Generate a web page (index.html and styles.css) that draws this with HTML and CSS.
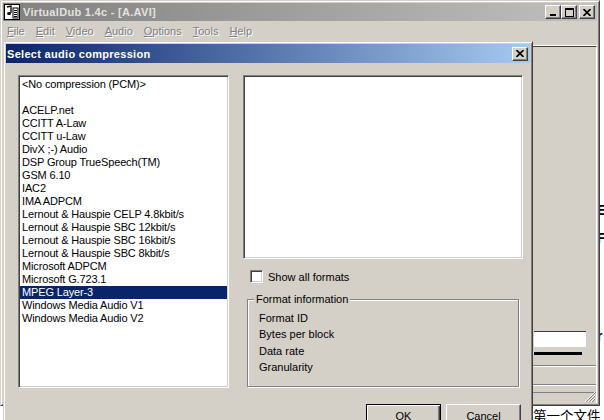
FILE: index.html
```html
<!DOCTYPE html>
<html lang="en">
<head>
  <meta charset="UTF-8" />
  <title>VirtualDub - Select audio compression</title>
  <link rel="stylesheet" href="styles.css">
</head>
<body>

  <div class="desktop">
    <!-- other windows peeking out behind -->
    <div class="behind-text">第一个文件</div>
    <div class="behind-edge">
      <span>E</span>
      <span>F</span>
      <span>r</span>
    </div>

    <!-- Main VirtualDub window (inactive) -->
    <div class="window main-window">
      <div class="titlebar inactive">
        <svg class="app-icon" width="16" height="16" viewBox="0 0 16 16">
          <rect x="0.5" y="0.5" width="15" height="15" fill="#fff" stroke="#000"/>
          <path d="M3 3 L7 2 L7 9" fill="none" stroke="#000" stroke-width="1.3"/>
          <ellipse cx="5" cy="9.5" rx="2" ry="1.6" fill="#000"/>
          <rect x="9" y="4" width="5" height="10" fill="#fff" stroke="#000"/>
          <path d="M10 6.5 H13 M10 8.5 H13 M10 10.5 H13 M10 12.5 H13" stroke="#000"/>
        </svg>
        <span class="title-text">VirtualDub 1.4c - [A.AVI]</span>
        <div class="caption-buttons">
          <span class="cap-btn">
            <svg width="8" height="8" viewBox="0 0 8 8"><rect x="1" y="6" width="6" height="2" fill="#000"/></svg>
          </span>
          <span class="cap-btn">
            <svg width="9" height="9" viewBox="0 0 9 9"><rect x="0.5" y="0.5" width="8" height="8" fill="none" stroke="#000"/><rect x="0" y="0" width="9" height="2" fill="#000"/></svg>
          </span>
          <span class="cap-btn close-gap">
            <svg width="8" height="7" viewBox="0 0 8 7"><path d="M0.5 0 L7.5 7 M7.5 0 L0.5 7" stroke="#000" stroke-width="1.6"/></svg>
          </span>
        </div>
      </div>

      <div class="menubar">
        <span><u>F</u>ile</span>
        <span><u>E</u>dit</span>
        <span><u>V</u>ideo</span>
        <span><u>A</u>udio</span>
        <span><u>O</u>ptions</span>
        <span><u>T</u>ools</span>
        <span><u>H</u>elp</span>
      </div>

      <div class="client">
        <div class="client-hidden"></div>
        <div class="side-pane">
          <div class="pane-fill"></div>
          <div class="pane-field"></div>
          <div class="pane-bar"></div>
          <div class="pane-row tall"></div>
          <div class="pane-row short"></div>
          <div class="pane-status">
            <svg class="grip" width="12" height="12" viewBox="0 0 12 12">
              <path d="M11 1 L1 11 M11 4 L4 11 M11 7 L7 11" stroke="#fff"/>
              <path d="M11 2 L2 11 M11 5 L5 11 M11 8 L8 11" stroke="#808080"/>
            </svg>
          </div>
        </div>
      </div>
    </div>

    <!-- Select audio compression dialog -->
    <div class="window dialog">
      <div class="titlebar active">
        <span class="title-text">Select audio compression</span>
        <span class="cap-btn dlg-close">
          <svg width="8" height="7" viewBox="0 0 8 7"><path d="M0.5 0 L7.5 7 M7.5 0 L0.5 7" stroke="#000" stroke-width="1.6"/></svg>
        </span>
      </div>

      <div class="dialog-body">
        <div class="dialog-main">
          <div class="sunken codec-list" id="codecList"></div>

          <div class="format-col">
            <div class="sunken format-list"></div>

            <label class="show-all">
              <span class="checkbox"></span>
              Show all formats
            </label>

            <div class="groupbox">
              <span class="group-label">Format information</span>
              <div class="info-row">Format ID</div>
              <div class="info-row">Bytes per block</div>
              <div class="info-row">Data rate</div>
              <div class="info-row">Granularity</div>
            </div>
          </div>
        </div>

        <div class="dialog-buttons">
          <button class="btn default">OK</button>
          <button class="btn">Cancel</button>
        </div>
      </div>
    </div>
  </div>

  <script>
    const codecs = [
      "<No compression (PCM)>",
      "",
      "ACELP.net",
      "CCITT A-Law",
      "CCITT u-Law",
      "DivX ;-) Audio",
      "DSP Group TrueSpeech(TM)",
      "GSM 6.10",
      "IAC2",
      "IMA ADPCM",
      "Lernout & Hauspie CELP 4.8kbit/s",
      "Lernout & Hauspie SBC 12kbit/s",
      "Lernout & Hauspie SBC 16kbit/s",
      "Lernout & Hauspie SBC 8kbit/s",
      "Microsoft ADPCM",
      "Microsoft G.723.1",
      "MPEG Layer-3",
      "Windows Media Audio V1",
      "Windows Media Audio V2"
    ];

    const selected = "MPEG Layer-3";
    const list = document.getElementById("codecList");

    codecs.forEach(name => {
      const item = document.createElement("div");
      item.className = "list-item";
      if (name === selected) item.className += " selected";
      item.textContent = name || "\u00a0";
      list.appendChild(item);
    });
  </script>
</body>
</html>
```

FILE: styles.css
```css
/* Base */
* {
  margin: 0;
  padding: 0;
  box-sizing: border-box;
}

body {
  width: 604px;
  height: 420px;
  overflow: hidden;
  background: #fff;
  font-family: "Liberation Sans", Arial, sans-serif;
  font-size: 11px;
  color: #000;
}

.desktop {
  position: relative;
  width: 604px;
  height: 420px;
  overflow: hidden;
}

/* Stuff from other windows behind */
.behind-text {
  position: absolute;
  left: 533px;
  top: 407px;
  font-family: "Noto Sans CJK SC", sans-serif;
  font-size: 13.5px;
  line-height: 16px;
  white-space: nowrap;
}

.behind-edge {
  position: absolute;
  left: 597px;
  top: 196px;
  display: flex;
  flex-direction: column;
  font-size: 14px;
  font-weight: bold;
  line-height: 28px;
}

.behind-edge span:last-child {
  margin-top: 70px;
}

/* Classic window frame */
.window {
  position: absolute;
  display: flex;
  flex-direction: column;
  background: #d4d0c8;
  border: 1px solid;
  border-color: #d4d0c8 #404040 #404040 #d4d0c8;
  box-shadow: inset 1px 1px 0 #fff, inset -1px -1px 0 #808080;
  padding: 2px;
}

.titlebar {
  display: flex;
  align-items: center;
  height: 18px;
  padding: 0 2px 0 1px;
  color: #fff;
  font-weight: bold;
  letter-spacing: 0.3px;
}

.titlebar.inactive {
  background: linear-gradient(to right, #808080, #c0c0c0);
  color: #e4e2dc;
}

.titlebar.active {
  height: 19px;
  background: linear-gradient(to right, #0a246a, #a6caf0);
}

.title-text {
  flex: 1;
  white-space: nowrap;
}

.app-icon {
  margin-right: 3px;
  flex-shrink: 0;
}

.caption-buttons {
  display: flex;
}

.cap-btn {
  width: 16px;
  height: 14px;
  display: flex;
  align-items: center;
  justify-content: center;
  background: #d4d0c8;
  border: 1px solid;
  border-color: #fff #404040 #404040 #fff;
  box-shadow: inset -1px -1px 0 #808080;
}

.close-gap {
  margin-left: 2px;
}

/* Main window */
.main-window {
  left: 0;
  top: 0;
  width: 600px;
  height: 406px;
}

.menubar {
  display: flex;
  align-items: center;
  gap: 11px;
  height: 20px;
  padding-left: 4px;
  color: #808080;
  text-shadow: 1px 1px 0 #fff;
}

.client {
  flex: 1;
  display: flex;
}

.client-hidden {
  width: 529px;
}

.side-pane {
  flex: 1;
  margin-top: 5px;
  display: flex;
  flex-direction: column;
  border-top: 1px solid #404040;
  border-left: 1px solid #404040;
  border-right: 1px solid #fff;
  box-shadow: 0 -1px 0 #fff;
}

.pane-fill {
  flex: 1;
}

.pane-field {
  width: 52px;
  height: 16px;
  background: #fff;
  border-top: 1px solid #404040;
  margin-left: 1px;
}

.pane-bar {
  width: 48px;
  height: 3px;
  margin: 5px 0 10px 1px;
  background: #000;
}

.pane-row {
  border-top: 1px solid #808080;
  box-shadow: inset 0 1px 0 #fff;
}

.pane-row.tall {
  height: 19px;
}

.pane-row.short {
  height: 8px;
}

.pane-status {
  height: 11px;
  border-top: 1px solid #808080;
  display: flex;
  justify-content: flex-end;
  align-items: flex-end;
}

.grip {
  display: block;
}

/* Dialog */
.dialog {
  left: 3px;
  top: 41px;
  width: 530px;
  height: 420px;
}

.dlg-close {
  margin-left: 4px;
}

.dialog-body {
  padding: 12px 7px 0 12px;
}

.dialog-main {
  display: flex;
  gap: 14px;
}

.sunken {
  background: #fff;
  border: 1px solid;
  border-color: #808080 #fff #fff #808080;
  box-shadow: inset 1px 1px 0 #404040, inset -1px -1px 0 #d4d0c8;
}

.codec-list {
  width: 211px;
  height: 313px;
  padding: 2px 1px 0 1px;
  letter-spacing: -0.15px;
}

.list-item {
  height: 13px;
  line-height: 13px;
  padding-left: 2px;
  white-space: nowrap;
}

.list-item.selected {
  background: #0a246a;
  color: #fff;
}

.format-col {
  width: 280px;
  display: flex;
  flex-direction: column;
}

.format-list {
  height: 184px;
}

.show-all {
  display: flex;
  align-items: center;
  gap: 5px;
  height: 13px;
  margin: 11px 0 0 7px;
}

.checkbox {
  width: 13px;
  height: 13px;
  background: #fff;
  border: 1px solid;
  border-color: #808080 #fff #fff #808080;
  box-shadow: inset 1px 1px 0 #404040, inset -1px -1px 0 #d4d0c8;
}

.groupbox {
  position: relative;
  width: 272px;
  height: 88px;
  margin: 16px 0 0 4px;
  padding: 10px 0 0 11px;
  border: 1px solid #808080;
  box-shadow: 1px 1px 0 #fff, inset 1px 1px 0 #fff;
}

.group-label {
  position: absolute;
  left: 6px;
  top: -7px;
  padding: 0 2px;
  line-height: 13px;
  background: #d4d0c8;
}

.info-row {
  line-height: 16.3px;
}

.dialog-buttons {
  display: flex;
  justify-content: flex-end;
  gap: 5px;
  margin-top: 16px;
  padding-right: 2px;
}

.btn {
  width: 75px;
  height: 23px;
  background: #d4d0c8;
  font-family: inherit;
  font-size: 11px;
  color: #000;
  border: 1px solid;
  border-color: #fff #404040 #404040 #fff;
  box-shadow: inset -1px -1px 0 #808080;
}

.btn.default {
  border: 1px solid #000;
  box-shadow: inset 1px 1px 0 #fff, inset -1px -1px 0 #404040, inset -2px -2px 0 #808080;
}
```
